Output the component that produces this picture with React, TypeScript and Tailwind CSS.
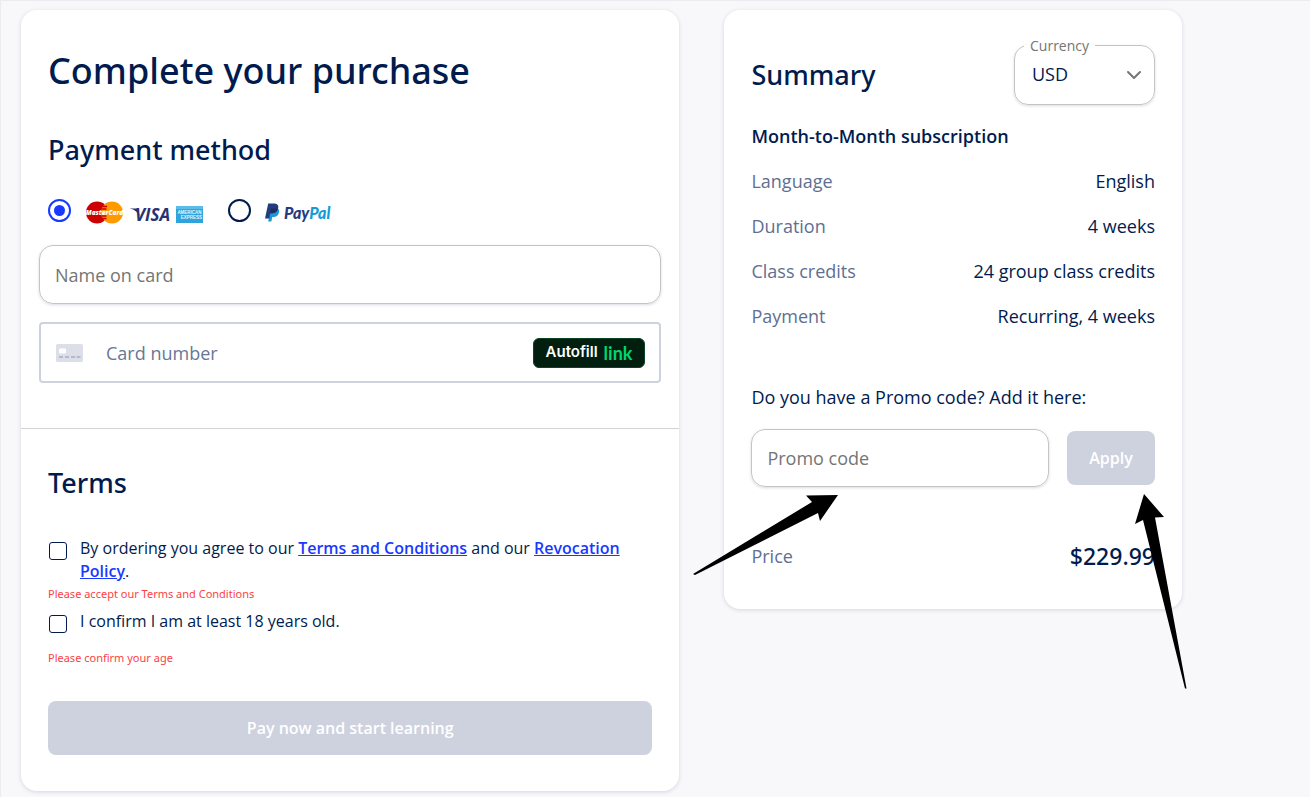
import { ChevronDown } from "lucide-react";

const details = [
  { label: "Language", value: "English" },
  { label: "Duration", value: "4 weeks" },
  { label: "Class credits", value: "24 group class credits" },
  { label: "Payment", value: "Recurring, 4 weeks" },
];

function CardLogos() {
  return (
    <svg width="120" height="25" viewBox="0 0 120 25" role="img" aria-label="MasterCard, VISA, American Express" className="mt-px">
      <circle cx="12" cy="12.500" r="11" fill="#cc0000" />
      <circle cx="27" cy="12.500" r="11" fill="#ff9900" />
      <path d="M17.500 6.500h4.500M16.500 9h5M16.500 16h5M17 18.500h4.500" stroke="#cc0000" strokeWidth="1.300" />
      <text
        x="19.500"
        y="15"
        textAnchor="middle"
        fontFamily="Open Sans, sans-serif"
        fontSize="6.500"
        fontWeight="800"
        fontStyle="italic"
        fill="#fff"
      >
        MasterCard
      </text>
      <text
        x="50"
        y="21"
        fontFamily="Open Sans, sans-serif"
        fontSize="17"
        fontWeight="700"
        fontStyle="italic"
        fill="#2b3170"
      >
        VISA
      </text>
      <path d="M44.500 8.500h8l2.500 8c-2-4-5-7-10.500-8z" fill="#2b3170" />
      <rect x="91" y="6" width="27" height="17" fill="#2ea3dc" />
      <path d="M91 6h27v3H91z" fill="#5cbde8" />
      <text x="104.500" y="13.500" textAnchor="middle" fontFamily="Liberation Sans, sans-serif" fontSize="4.500" fontWeight="700" fill="#e4f5fd">
        AMERICAN
      </text>
      <text x="106.500" y="19" textAnchor="middle" fontFamily="Liberation Sans, sans-serif" fontSize="4.500" fontWeight="700" fill="#e4f5fd">
        EXPRESS
      </text>
    </svg>
  );
}

function PayPalLogo() {
  return (
    <svg width="70" height="20" viewBox="0 0 70 20" role="img" aria-label="PayPal" className="mt-1">
      <path
        d="M12.600 5.200c1.400.900 1.800 2.300 1.400 4.200-.7 3.200-2.800 4.600-5.800 4.600H7.200l-.8 4.400H3.200l.5-3 2-10.200z"
        fill="#179bd7"
      />
      <path
        d="M3.200.5h5.600c3.300 0 5 1.500 4.400 4.500-.6 3.300-2.800 5.200-6 5.200H5.200l-.9 5.200H0z"
        fill="#253b80"
      />
      <path d="M6 5.400h6.800c-.7 3.300-2.800 4.800-5.700 4.800H5.200z" fill="#222d65" />
      <text x="19" y="15.500" fontFamily="Lato, sans-serif" fontSize="16" fontWeight="900" fontStyle="italic" fill="#253b80">
        Pay<tspan fill="#179bd7">Pal</tspan>
      </text>
    </svg>
  );
}

function CardIcon() {
  return (
    <svg width="27" height="18" viewBox="0 0 27 18" aria-hidden="true" className="shrink-0">
      <rect width="27" height="18" rx="1.500" fill="#dcdfe8" />
      <rect x="3" y="4.500" width="7" height="5" rx="1" fill="#fff" />
      <path d="M3 13h4M9 13h4M15 13h4M20.500 13h4" stroke="#b3bacb" strokeWidth="2" />
    </svg>
  );
}

function PaymentCard() {
  return (
    <form className="rounded-2xl bg-white pb-9 shadow-[0_1px_4px_rgba(0,20,80,0.15)]">
      <section className="border-b border-[#d2d3d6] px-[18px] pt-[31px] pb-[45px]">
        <h1 className="px-[9px] font-['Noto_Sans',sans-serif] text-4xl leading-[60px] font-medium">
          Complete your purchase
        </h1>
        <h2 className="mt-[29px] px-[9px] font-['Noto_Sans',sans-serif] text-[27px] leading-10 font-medium">
          Payment method
        </h2>

        <div className="mt-[29px] flex items-start px-[9px]">
          <label className="flex items-start gap-[14px]">
            <input
              type="radio"
              name="method"
              defaultChecked
              className="size-[23px] appearance-none rounded-full border-2 border-[#011b4e] bg-white bg-clip-content p-[4px] checked:border-[#183aff] checked:bg-[#183aff]"
            />
            <CardLogos />
          </label>
          <label className="ml-[23px] flex items-start gap-[14px]">
            <input
              type="radio"
              name="method"
              className="size-[23px] appearance-none rounded-full border-2 border-[#011b4e] bg-white bg-clip-content p-[4px] checked:border-[#183aff] checked:bg-[#183aff]"
            />
            <PayPalLogo />
          </label>
        </div>

        <input
          type="text"
          aria-label="Name on card"
          placeholder="Name on card"
          className="mt-5 h-[59px] w-full rounded-[14px] border border-[#c4c4c4] px-[15px] text-lg shadow-[0_1px_3px_rgba(0,20,80,0.15)] placeholder:text-[#757575]"
        />

        <div className="mt-[18px] flex h-[61px] items-center rounded border-2 border-[#ced2de] pr-[14px] pl-[15px]">
          <CardIcon />
          <input
            type="text"
            aria-label="Card number"
            placeholder="Card number"
            className="ml-[23px] min-w-0 flex-1 text-lg placeholder:text-[#677797]"
          />
          <button
            type="button"
            className="flex h-[30px] items-center gap-[6px] rounded-md border border-[#0a4425] bg-[#011e0f] px-3 font-[Inter,sans-serif] text-[15px] font-semibold text-white"
          >
            Autofill
            <span className="font-[Lato,sans-serif] text-lg leading-5 font-bold text-[#00d66f]">link</span>
          </button>
        </div>
      </section>

      <section className="px-[27px] pt-[34px]">
        <h2 className="font-['Noto_Sans',sans-serif] text-[27px] leading-10 font-medium">Terms</h2>

        <label className="mt-[34px] flex items-start gap-[13px]">
          <input
            type="checkbox"
            className="mt-[5px] ml-px size-[18px] shrink-0 appearance-none rounded-[3px] border border-[#011b4e] checked:bg-[#183aff]"
          />
          <span className="text-base leading-[23px]">
            By ordering you agree to our{" "}
            <a href="#terms" className="font-semibold text-[#183aff] underline">
              Terms and Conditions
            </a>{" "}
            and our{" "}
            <a href="#revocation" className="font-semibold text-[#183aff] underline">
              Revocation Policy
            </a>
            .
          </span>
        </label>
        <p className="mt-[3px] font-['Noto_Sans',sans-serif] text-[11px] leading-4 text-[#fc3f43]">
          Please accept our Terms and Conditions
        </p>

        <label className="mt-2 flex items-start gap-[13px]">
          <input
            type="checkbox"
            className="mt-[5px] ml-px size-[18px] shrink-0 appearance-none rounded-[3px] border border-[#011b4e] checked:bg-[#183aff]"
          />
          <span className="text-base leading-[23px]">I confirm I am at least 18 years old.</span>
        </label>
        <p className="mt-[17px] font-['Noto_Sans',sans-serif] text-[11px] leading-4 text-[#fc3f43]">
          Please confirm your age
        </p>

        <button
          type="submit"
          disabled
          className="mt-[35px] h-[54px] w-full rounded-lg bg-[#ced2de] text-base font-semibold text-white"
        >
          Pay now and start learning
        </button>
      </section>
    </form>
  );
}

function SummaryCard() {
  return (
    <aside className="relative rounded-2xl bg-white px-[27px] pt-[27px] pb-[37px] shadow-[0_1px_4px_rgba(0,20,80,0.15)]">
      <div className="flex items-end justify-between">
        <h2 className="mb-[10px] font-['Noto_Sans',sans-serif] text-[27px] leading-10 font-medium">Summary</h2>
        <fieldset className="relative h-[68px] w-[141px] rounded-[14px] border border-[#c4c4c4] px-2 shadow-[0_1px_3px_rgba(0,20,80,0.15)]">
          <legend className="ml-px px-[6px] text-sm leading-[17px] text-[#757575]">
            <label htmlFor="currency">Currency</label>
          </legend>
          <select id="currency" defaultValue="USD" className="h-10 w-full appearance-none pl-[9px] text-lg">
            <option>USD</option>
          </select>
          <ChevronDown className="pointer-events-none absolute top-[9px] right-2 size-6 text-[#757575]" />
        </fieldset>
      </div>

      <h3 className="mt-[17px] text-lg leading-7 font-semibold">Month-to-Month subscription</h3>
      <dl className="mt-[17px] space-y-[17px] text-lg leading-7">
        {details.map((item) => (
          <div key={item.label} className="flex justify-between">
            <dt className="text-[#5e6f92]">{item.label}</dt>
            <dd>{item.value}</dd>
          </div>
        ))}
      </dl>

      <label htmlFor="promo" className="mt-[53px] block text-lg leading-7">
        Do you have a Promo code? Add it here:
      </label>
      <div className="mt-[18px] flex items-center gap-[18px]">
        <input
          id="promo"
          type="text"
          placeholder="Promo code"
          className="h-[58px] min-w-0 flex-1 rounded-[14px] border border-[#c4c4c4] px-[15px] text-lg shadow-[0_1px_3px_rgba(0,20,80,0.15)] placeholder:text-[#757575]"
        />
        <button type="button" disabled className="h-[54px] w-[88px] rounded-lg bg-[#ced2de] text-base font-semibold text-white">
          Apply
        </button>
      </div>

      <div className="mt-[53px] flex items-center justify-between">
        <span className="text-lg leading-8 text-[#5e6f92]">Price</span>
        <span className="font-['Noto_Sans',sans-serif] text-[23px] leading-8 font-medium">$229.99</span>
      </div>

      <svg width="148" height="82" viewBox="0 0 148 82" aria-hidden="true" className="pointer-events-none absolute top-[484px] left-[-32px]">
        <path d="M1 80 120 8l-6-6.500L146 1l-18 26-2-8L3 81z" fill="#000" />
      </svg>
      <svg width="54" height="196" viewBox="0 0 54 196" aria-hidden="true" className="pointer-events-none absolute top-[484px] right-[-5px]">
        <path d="M11 0 31 23l-9 .5 31.500 171-1.500 0L10 26l-8 4z" fill="#000" />
      </svg>
    </aside>
  );
}

export default function App() {
  return (
    <main className="min-h-screen border-t border-l border-[#ececf0] bg-[#f8f8fb] pt-[9px] pr-32 pb-1 pl-5 font-['Open_Sans','Noto_Sans',sans-serif] text-[#011b4e]">
      <div className="grid grid-cols-[59fr_41fr] items-start gap-[45px]">
        <PaymentCard />
        <SummaryCard />
      </div>
    </main>
  );
}
